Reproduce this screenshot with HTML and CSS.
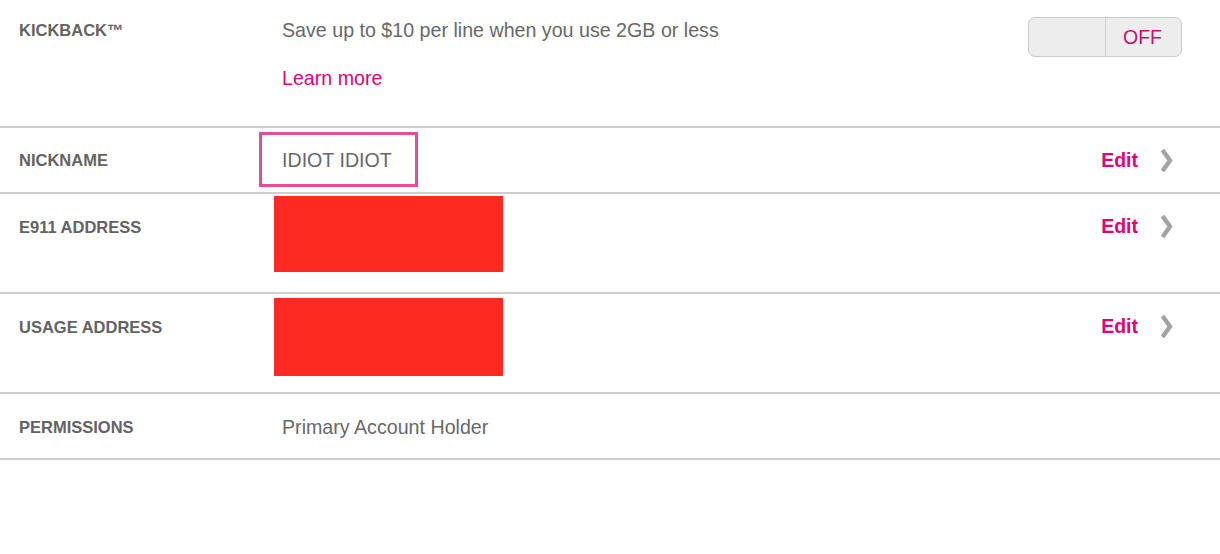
FILE: index.html
```html
<!DOCTYPE html>
<html lang="en">
<head>
<meta charset="utf-8">
<title>Line settings</title>
<link rel="stylesheet" href="styles.css">
</head>
<body>
<div class="settings">
  <div class="row row-kick">
    <div class="label">KICKBACK™</div>
    <div class="value">
      <div>Save up to $10 per line when you use 2GB or less</div>
      <a class="learn" href="#">Learn more</a>
    </div>
    <div class="toggle-wrap">
      <div class="toggle">
        <span class="toggle-knob"></span>
        <span class="toggle-off">OFF</span>
      </div>
    </div>
  </div>

  <div class="row row-nick">
    <div class="label">NICKNAME</div>
    <div class="value">
      <span class="nick-box">IDIOT IDIOT</span>
    </div>
    <div class="action">
      <a class="edit" href="#">Edit</a>
      <svg class="chev" width="13" height="25" viewBox="0 0 13 25"><polyline points="2.5,2 10,12.5 2.5,23" fill="none" stroke="#a3a3a3" stroke-width="4.4"/></svg>
    </div>
  </div>

  <div class="row row-tall">
    <div class="label">E911 ADDRESS</div>
    <div class="value">
      <div class="redact redact-a"></div>
    </div>
    <div class="action">
      <a class="edit" href="#">Edit</a>
      <svg class="chev" width="13" height="25" viewBox="0 0 13 25"><polyline points="2.5,2 10,12.5 2.5,23" fill="none" stroke="#a3a3a3" stroke-width="4.4"/></svg>
    </div>
  </div>

  <div class="row row-tall">
    <div class="label">USAGE ADDRESS</div>
    <div class="value">
      <div class="redact redact-b"></div>
    </div>
    <div class="action">
      <a class="edit" href="#">Edit</a>
      <svg class="chev" width="13" height="25" viewBox="0 0 13 25"><polyline points="2.5,2 10,12.5 2.5,23" fill="none" stroke="#a3a3a3" stroke-width="4.4"/></svg>
    </div>
  </div>

  <div class="row row-perm">
    <div class="label">PERMISSIONS</div>
    <div class="value">Primary Account Holder</div>
  </div>
</div>
</body>
</html>
```

FILE: styles.css
```css
html, body {
  margin: 0;
  padding: 0;
  background: #ffffff;
}

body {
  font-family: "Liberation Sans", Arial, Helvetica, sans-serif;
  color: #6a6a6a;
}

.settings {
  width: 1220px;
}

.row {
  display: flex;
  align-items: flex-start;
  box-sizing: border-box;
  border-bottom: 2px solid #cfcfcf;
  padding-top: 22px;
}

.label {
  width: 263px;
  padding-left: 19px;
  flex: none;
  font-size: 16.5px;
  font-weight: bold;
  line-height: 22px;
  color: #636363;
}

.value {
  flex: 1;
  position: relative;
  font-size: 19.65px;
  line-height: 22px;
  color: #686868;
}

/* Kickback row */
.row-kick {
  height: 128px;
  padding-top: 19px;
}

.learn {
  display: inline-block;
  margin-top: 26px;
  color: #e20074;
  text-decoration: none;
}

.toggle-wrap {
  flex: none;
  margin-top: -2px;
  margin-right: 38px;
}

.toggle {
  display: flex;
  width: 154px;
  height: 40px;
  box-sizing: border-box;
  border: 1px solid #cccccc;
  border-radius: 7px;
  background: #ededed;
  overflow: hidden;
}

.toggle-knob {
  width: 76px;
  border-right: 1px solid #cfcfcf;
}

.toggle-off {
  flex: 1;
  display: flex;
  align-items: center;
  justify-content: center;
  font-size: 19.5px;
  color: #c8106a;
  padding-right: 2px;
}

/* Nickname row */
.row-nick {
  height: 66px;
  padding-top: 0;
  align-items: center;
}

.nick-box {
  display: inline-flex;
  align-items: center;
  box-sizing: border-box;
  width: 159px;
  height: 55px;
  margin-left: -23px;
  margin-top: -1px;
  padding-left: 20px;
  border: 3px solid #e64d98;
}

.row-nick .action {
  margin-top: 0;
}

/* Address rows */
.row-tall {
  height: 100px;
}

.redact {
  position: absolute;
  left: -8px;
  top: -20px;
  width: 229px;
  background: #fd2b1f;
}

.redact-a {
  height: 76px;
}

.redact-b {
  top: -18px;
  height: 78px;
}

.row-perm {
  height: 66px;
}

/* Actions */
.action {
  flex: none;
  display: flex;
  align-items: center;
  margin-right: 47px;
  height: 22px;
  margin-top: -1px;
}

.edit {
  font-size: 19.5px;
  font-weight: bold;
  color: #e20074;
  text-decoration: none;
  line-height: 22px;
}

.chev {
  display: block;
  margin-left: 22px;
}
```
